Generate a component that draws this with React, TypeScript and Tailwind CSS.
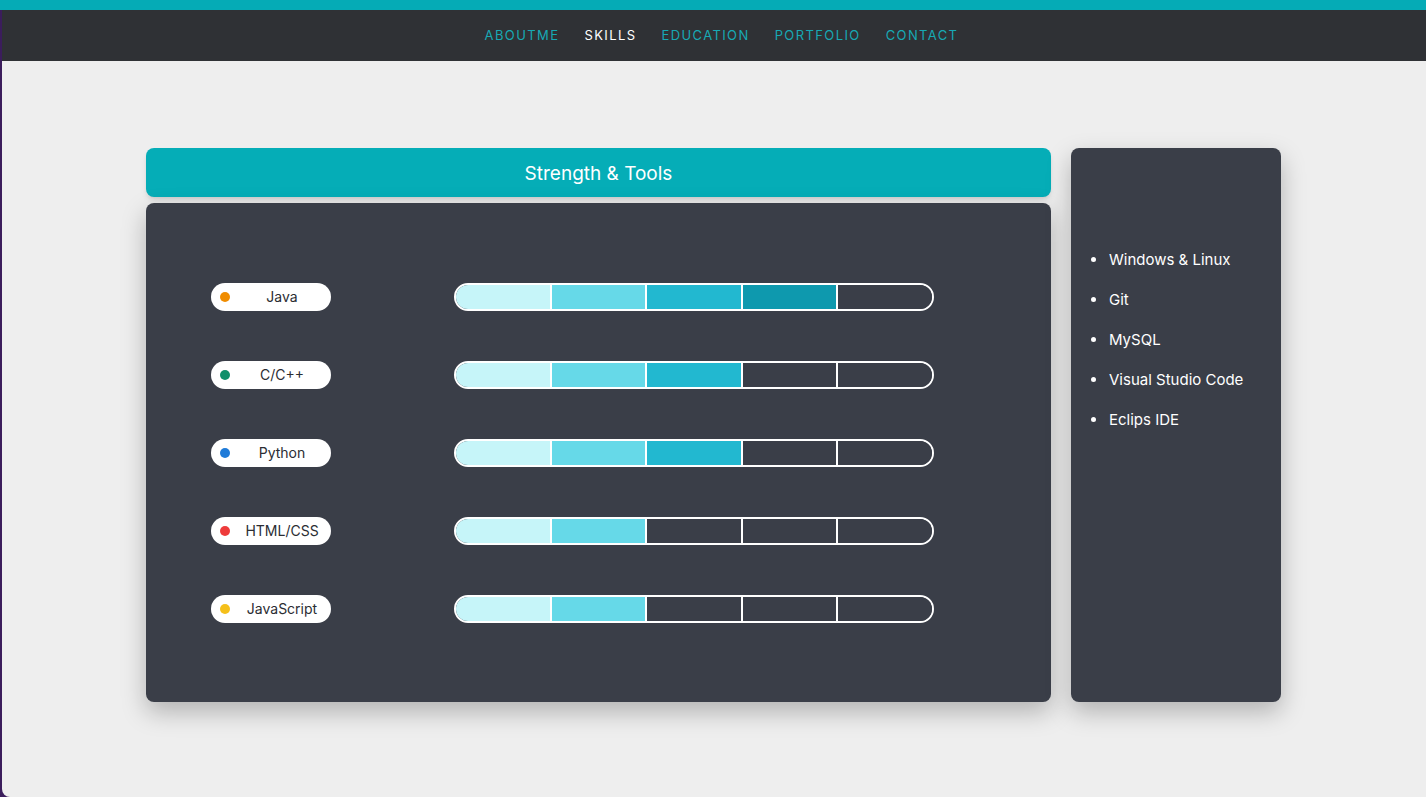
const skills = [
  { name: "Java", dot: "bg-[#f08c00]", level: 4 },
  { name: "C/C++", dot: "bg-[#0f8f6a]", level: 3 },
  { name: "Python", dot: "bg-[#1f7bd8]", level: 3 },
  { name: "HTML/CSS", dot: "bg-[#ee3b3b]", level: 2 },
  { name: "JavaScript", dot: "bg-[#f5c01a]", level: 2 },
];

const segColors = ["bg-[#c6f5f9]", "bg-[#66d9e8]", "bg-[#22b8d0]", "bg-[#0e99ae]", "bg-[#3a3e48]"];

const tools = ["Windows & Linux", "Git", "MySQL", "Visual Studio Code", "Eclips IDE"];

const navItems = ["ABOUTME", "SKILLS", "EDUCATION", "PORTFOLIO", "CONTACT"];

function SkillBar({ level }: { level: number }) {
  return (
    <div className="flex h-[28px] w-[480px] overflow-hidden rounded-full border-2 border-white bg-[#3a3e48]">
      {Array.from({ length: 5 }).map((_, i) => (
        <div
          key={i}
          className={`h-full flex-1 ${i < 4 ? "border-r-2 border-white" : ""} ${
            i < level ? segColors[i] : "bg-[#3a3e48]"
          }`}
        />
      ))}
    </div>
  );
}

export default function App() {
  return (
    <div className="h-[797px] w-full overflow-hidden bg-[#3b1d5c] font-['Inter','Open_Sans',sans-serif]">
      <div className="h-[10px] w-full bg-[#05abb6]" />
      <div className="ml-[2px] flex h-[787px] flex-col rounded-bl-[8px] bg-[#eeeeee]">
        <nav className="flex h-[51px] items-center justify-center gap-[25px] bg-[#2f3135] pl-[15px] text-[13px] tracking-[1.4px]">
          {navItems.map((item) => (
            <span key={item} className={item === "SKILLS" ? "text-white" : "text-[#17a9b4]"}>
              {item}
            </span>
          ))}
        </nav>
        <main className="flex justify-center gap-[20px] pr-[1px] pt-[87px]">
          <div className="flex w-[905px] flex-col gap-[6px]">
            <div className="flex h-[49px] items-center justify-center rounded-[8px] bg-[#05adb7] pt-[3px] text-[19px] text-white shadow-md">
              Strength &amp; Tools
            </div>
            <div className="flex h-[499px] flex-col justify-center gap-[50px] rounded-[8px] bg-[#3a3e48] pl-[65px] shadow-[0_10px_25px_rgba(0,0,0,0.25)]">
              {skills.map((s) => (
                <div key={s.name} className="flex items-center gap-[123px]">
                  <div className="relative flex h-[28px] w-[120px] items-center justify-center rounded-full bg-white pl-[22px] text-[14px] text-[#2b2d33]">
                    <span className={`absolute left-[9px] h-[10px] w-[10px] rounded-full ${s.dot}`} />
                    <span>{s.name}</span>
                  </div>
                  <SkillBar level={s.level} />
                </div>
              ))}
            </div>
          </div>
          <div className="h-[554px] w-[210px] rounded-[8px] bg-[#3a3e48] pt-[102px] shadow-[0_10px_25px_rgba(0,0,0,0.25)]">
            <ul className="flex list-disc flex-col gap-[20px] pl-[37px] text-[15px] text-white">
              {tools.map((t) => (
                <li key={t} className="h-[20px] pl-[1px] leading-[20px]">
                  {t}
                </li>
              ))}
            </ul>
          </div>
        </main>
      </div>
    </div>
  );
}
